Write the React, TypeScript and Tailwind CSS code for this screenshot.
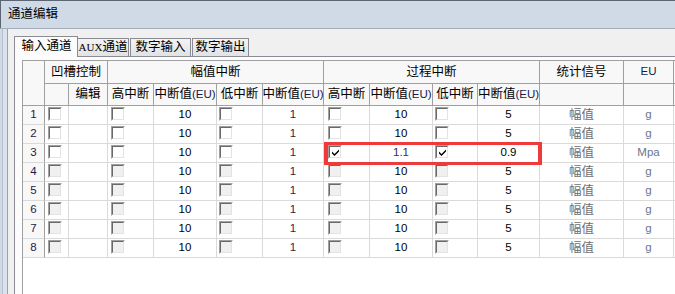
import React from "react";

const FONT = "font-['Liberation_Sans','Noto_Sans_CJK_SC',sans-serif]";

function Check({ checked, disabled }: { checked?: boolean; disabled?: boolean }) {
  return (
    <div className="w-[14px] h-[14px] border border-t-[#a0a0a0] border-l-[#a0a0a0] border-b-white border-r-white">
      <div
        className={`w-full h-full border border-t-[#696969] border-l-[#696969] border-b-[#e3e3e3] border-r-[#e3e3e3] flex items-center justify-center ${
          disabled ? "bg-[#f0f0f0]" : "bg-white"
        }`}
      >
        {checked && (
          <svg width="7" height="7" viewBox="0 0 7 7">
            <path d="M0 2.5 L2.5 5 L7 0.5 L7 2.5 L2.5 7 L0 4.5Z" fill="#000" />
          </svg>
        )}
      </div>
    </div>
  );
}

const H = "border-r border-b border-[#a0a0a0] bg-[#f8f8f8] flex items-center justify-center leading-none text-black shrink-0";
const D = "border-r border-b border-[#dadada] flex items-center justify-center leading-none shrink-0";
const DC = "border-r border-b border-[#dadada] flex items-start pt-[1px] shrink-0";

type Row = { n: number; a: string; b: string; c: string; d: string; eu: string; checked: boolean };

const rows: Row[] = [1, 2, 3, 4, 5, 6, 7, 8].map((n) => ({
  n,
  a: "10",
  b: "1",
  c: n === 3 ? "1.1" : "10",
  d: n === 3 ? "0.9" : "5",
  eu: n === 3 ? "Mpa" : "g",
  checked: n === 3,
}));

function EUText() {
  return (
    <span className="whitespace-nowrap">
      中断值<span className="text-[11.5px] text-[#1a1a50]">(EU)</span>
    </span>
  );
}

export default function App() {
  return (
    <div className={`w-[675px] h-[294px] overflow-hidden relative flex flex-col bg-[#cfdae6] ${FONT}`}>
      <div className="h-[28px] shrink-0 border-t border-l border-[#5b6672] pl-[7px] flex items-center text-[12.5px] text-black leading-none">
        通道编辑
      </div>
      <div className="flex-1 flex border-t border-[#a4afbb] min-h-0">
        <div className="w-[7px] shrink-0 flex">
          <div className="w-[2px] bg-[#cfdae6]" />
          <div className="w-[1px] bg-[#b7c2ce]" />
          <div className="flex-1 bg-[#dae3ec]" />
        </div>
        <div className="flex-1 border-l border-[#a0a0a0] bg-[#f0f0f0] pl-[6px] pt-[7px] flex flex-col min-w-0">
          {/* Tabs */}
          <div className="h-[20px] flex items-end shrink-0 text-[12.5px] leading-none text-black">
            <div className="relative z-10 w-[64px] h-[21px] -mb-[1px] border-t border-l border-r border-[#898c95] bg-[#fcfcfc] flex items-center justify-center pb-[1px] pl-[1px]">
              输入通道
            </div>
            <div className="w-[51px] h-[18px] border-t border-r border-[#898c95] bg-gradient-to-b from-[#f3f3f3] to-[#e2e2e2] flex items-center justify-center">
              <span className="font-['Liberation_Serif',serif] text-[11px]">AUX</span>通道
            </div>
            <div className="w-[1px]" />
            <div className="w-[61px] h-[18px] border-t border-l border-r border-[#898c95] bg-gradient-to-b from-[#f3f3f3] to-[#e2e2e2] flex items-center justify-center">
              数字输入
            </div>
            <div className="w-[1px]" />
            <div className="w-[57px] h-[18px] border-t border-l border-r border-[#898c95] bg-gradient-to-b from-[#f3f3f3] to-[#e2e2e2] flex items-center justify-center">
              数字输出
            </div>
          </div>
          {/* Panel */}
          <div className="flex-1 border-t border-l border-[#898c95] bg-[#fcfcfc] pl-[7px] pt-[3px] flex flex-col min-h-0">
            <div className="flex-1 bg-white border-t border-l border-[#a0a0a0] flex flex-col text-[12.5px]">
              {/* Header */}
              <div className="flex shrink-0">
                <div className={`${H} w-[22px] h-[45px]`} />
                <div className="flex flex-col">
                  <div className="flex h-[23px]">
                    <div className={`${H} w-[63px]`}>凹槽控制</div>
                    <div className={`${H} w-[216px]`}>幅值中断</div>
                    <div className={`${H} w-[216px]`}>过程中断</div>
                    <div className={`${H} w-[84px]`}>统计信号</div>
                    <div className={`${H} w-[50px]`}>
                      <span className="text-[11.5px] text-[#1a1a50]">EU</span>
                    </div>
                    <div className={`${H} w-[30px]`} />
                  </div>
                  <div className="flex h-[22px]">
                    <div className={`${H} w-[24px]`} />
                    <div className={`${H} w-[39px]`}>编辑</div>
                    <div className={`${H} w-[46px]`}>高中断</div>
                    <div className={`${H} w-[63px]`}><EUText /></div>
                    <div className={`${H} w-[46px]`}>低中断</div>
                    <div className={`${H} w-[61px]`}><EUText /></div>
                    <div className={`${H} w-[46px]`}>高中断</div>
                    <div className={`${H} w-[63px]`}><EUText /></div>
                    <div className={`${H} w-[45px]`}>低中断</div>
                    <div className={`${H} w-[62px]`}><EUText /></div>
                    <div className={`${H} w-[84px]`} />
                    <div className={`${H} w-[50px]`} />
                    <div className={`${H} w-[30px]`} />
                  </div>
                </div>
              </div>
              {/* Rows */}
              {rows.map((r) => {
                const dis = r.n > 3;
                return (
                  <div key={r.n} className="flex h-[19px] shrink-0 text-[11.5px]">
                    <div className="w-[22px] shrink-0 border-r border-r-[#a0a0a0] border-b border-b-[#dadada] bg-[#f8f8f8] flex items-center justify-center leading-none text-[#1c1c48]">
                      {r.n}
                    </div>
                    <div className={`${DC} w-[24px] pl-[3px]`}><Check disabled={dis} /></div>
                    <div className={`${D} w-[39px]`} />
                    <div className={`${DC} w-[46px] pl-[3px]`}><Check disabled={dis} /></div>
                    <div className={`${D} w-[63px] text-black`}>{r.a}</div>
                    <div className={`${DC} w-[46px] pl-[2px]`}><Check disabled={dis} /></div>
                    <div className={`${D} w-[61px] text-[#3a1a4a]`}>{r.b}</div>
                    <div className={`${DC} w-[46px] pl-[4px]`}><Check disabled={dis} checked={r.checked} /></div>
                    <div className={`${D} w-[63px] ${r.n === 3 ? "text-[#3a2a60]" : "text-black"}`}>{r.c}</div>
                    <div className={`${DC} w-[45px] pl-[2px]`}><Check disabled={dis} checked={r.checked} /></div>
                    <div className={`${D} w-[62px] text-black`}>{r.d}</div>
                    <div className={`${D} w-[84px] text-[12.5px] text-[#6e6e6e]`}>幅值</div>
                    <div className={`${D} w-[50px] text-[#6a7590]`}>{r.eu}</div>
                    <div className={`${D} w-[30px]`} />
                  </div>
                );
              })}
            </div>
          </div>
        </div>
      </div>
      {/* Red annotation box */}
      <div className="absolute left-[324px] top-[142px] w-[218px] h-[23px] border-x-[4px] border-y-[3px] border-[#ee3a3a] pointer-events-none" />
    </div>
  );
}
